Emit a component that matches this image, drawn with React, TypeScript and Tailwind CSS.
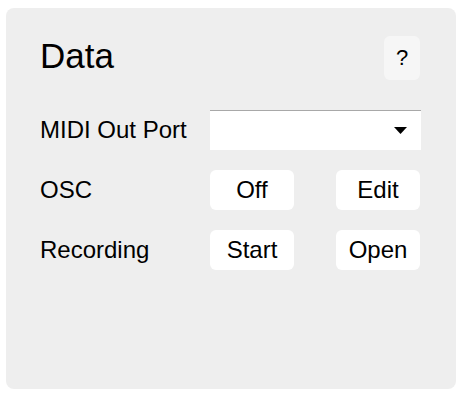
export default function App() {
  return (
    <div className="min-h-screen bg-white pt-2 pl-1.5" style={{ fontFamily: '"Liberation Sans", Arial, sans-serif' }}>
      <div className="w-[450px] h-[381px] rounded-lg bg-[#eeeeee] pt-7 pl-[34px] pr-[36px] text-black">
        {/* Header */}
        <div className="flex items-center justify-between h-11">
          <h1 className="text-[35px] leading-none mb-[6px]">Data</h1>
          <button className="w-9 h-11 rounded-md bg-[#f6f6f6] text-[22px] leading-none">?</button>
        </div>

        {/* Rows */}
        <div className="mt-[30px] grid grid-cols-[170px_84px_42px_84px] gap-y-5 items-center text-[24px] leading-none">
          <span>MIDI Out Port</span>
          <div className="col-span-3 -mr-px h-10 bg-white border-t border-[#a8a8a8] flex items-center justify-end pr-[14px]">
            <svg width="13" height="7" viewBox="0 0 13 7">
              <path d="M0 0 H13 L6.5 7 Z" fill="black" />
            </svg>
          </div>

          <span>OSC</span>
          <button className="h-10 rounded-md bg-white">Off</button>
          <span />
          <button className="h-10 rounded-md bg-white">Edit</button>

          <span>Recording</span>
          <button className="h-10 rounded-md bg-white">Start</button>
          <span />
          <button className="h-10 rounded-md bg-white">Open</button>
        </div>
      </div>
    </div>
  );
}
